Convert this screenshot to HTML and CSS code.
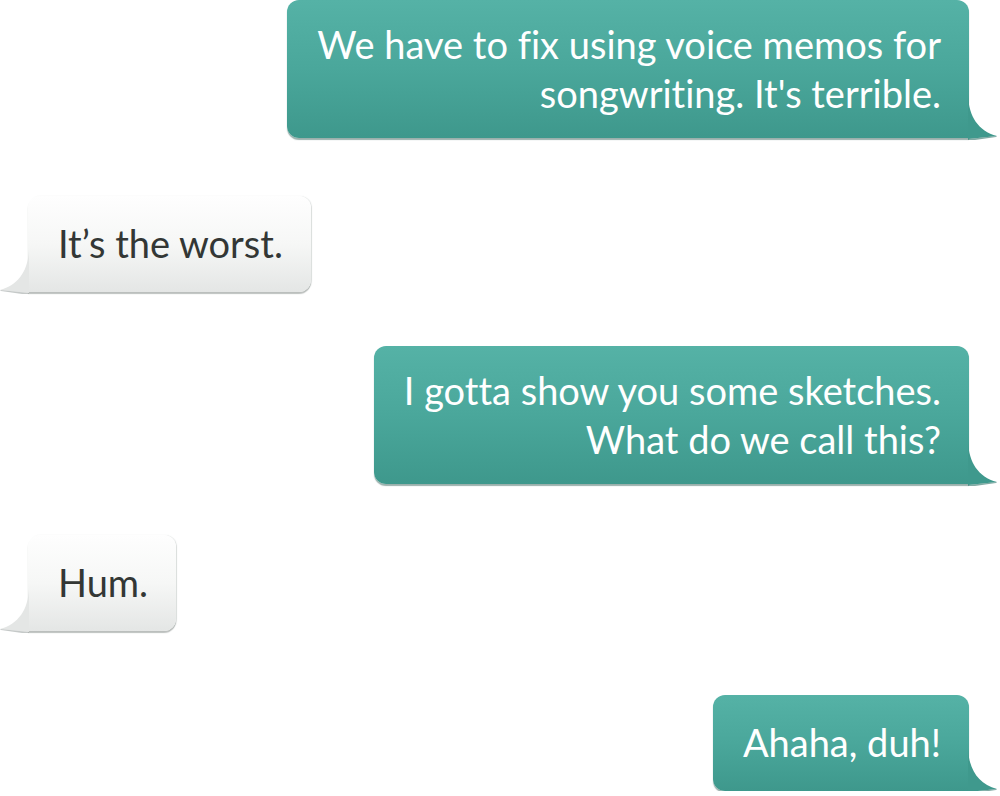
FILE: index.html
```html
<!DOCTYPE html>
<html>
<head>
<meta charset="utf-8">
<link rel="stylesheet" href="styles.css">
</head>
<body>
<div class="chat">
  <div class="row out m1">
    <div class="bubble teal two">We have to fix using voice memos for<br>songwriting. It's terrible.
      <svg class="tail tail-r" width="30" height="44" viewBox="0 0 30 44"><path d="M0 0 C1 20 10 35 29 40 L0 43 Z" fill="#3f998d"/><path d="M0 43 L29 40 L28 41 L0 45 Z" fill="#2e7168" opacity="0.6"/></svg>
    </div>
  </div>
  <div class="row in m2">
    <div class="bubble white one">It’s the worst.
      <svg class="tail tail-l" width="30" height="44" viewBox="0 0 30 44"><path d="M30 0 C29 20 20 35 1 40 L30 43 Z" fill="#e4e6e5"/><path d="M30 43 L1 40 L2 41 L30 45 Z" fill="#9fa5a3" opacity="0.6"/></svg>
    </div>
  </div>
  <div class="row out m3">
    <div class="bubble teal two">I gotta show you some sketches.<br>What do we call this?
      <svg class="tail tail-r" width="30" height="44" viewBox="0 0 30 44"><path d="M0 0 C1 20 10 35 29 40 L0 43 Z" fill="#3f998d"/><path d="M0 43 L29 40 L28 41 L0 45 Z" fill="#2e7168" opacity="0.6"/></svg>
    </div>
  </div>
  <div class="row in m4">
    <div class="bubble white one">Hum.
      <svg class="tail tail-l" width="30" height="44" viewBox="0 0 30 44"><path d="M30 0 C29 20 20 35 1 40 L30 43 Z" fill="#e4e6e5"/><path d="M30 43 L1 40 L2 41 L30 45 Z" fill="#9fa5a3" opacity="0.6"/></svg>
    </div>
  </div>
  <div class="row out m5">
    <div class="bubble teal one">Ahaha, duh!
      <svg class="tail tail-r" width="30" height="44" viewBox="0 0 30 44"><path d="M0 0 C1 20 10 35 29 40 L0 43 Z" fill="#3f998d"/><path d="M0 43 L29 40 L28 41 L0 45 Z" fill="#2e7168" opacity="0.6"/></svg>
    </div>
  </div>
</div>
</body>
</html>
```
FILE: styles.css
```css
html, body {
  margin: 0;
  padding: 0;
  background: #ffffff;
}
.chat {
  width: 1000px;
  display: flex;
  flex-direction: column;
  font-family: Lato, "Open Sans", sans-serif;
  font-size: 38px;
  line-height: 49px;
  font-variant-ligatures: none;
}
.row {
  display: flex;
}
.row.out {
  justify-content: flex-end;
  padding-right: 31px;
}
.row.in {
  justify-content: flex-start;
  padding-left: 28px;
}
.m1 { margin-top: 0; }
.m2 { margin-top: 58px; }
.m3 { margin-top: 54px; }
.m4 { margin-top: 51px; }
.m5 { margin-top: 64px; }
.bubble {
  position: relative;
  border-radius: 12px;
  padding-left: 30px;
  padding-right: 28px;
}
.bubble.two {
  padding-top: 20px;
  padding-bottom: 20px;
  text-align: right;
}
.bubble.one {
  padding-top: 23px;
  padding-bottom: 24px;
}
.teal {
  color: #ffffff;
  background: linear-gradient(to bottom, #55b2a6 0%, #4aa79b 50%, #3e988c 100%);
  box-shadow: 0 2px 1px rgba(30, 80, 70, 0.45);
  border-bottom-right-radius: 0;
}
.white {
  color: #333735;
  background: linear-gradient(to bottom, #fefefe 0%, #f6f7f6 50%, #e4e6e5 100%);
  box-shadow: 0 2px 1px rgba(90, 100, 95, 0.4), 1px 0 1px rgba(150, 160, 155, 0.3);
  border-bottom-left-radius: 0;
}
.tail {
  position: absolute;
  bottom: -2px;
}
.tail-r {
  right: -29px;
}
.tail-l {
  left: -29px;
}
```
